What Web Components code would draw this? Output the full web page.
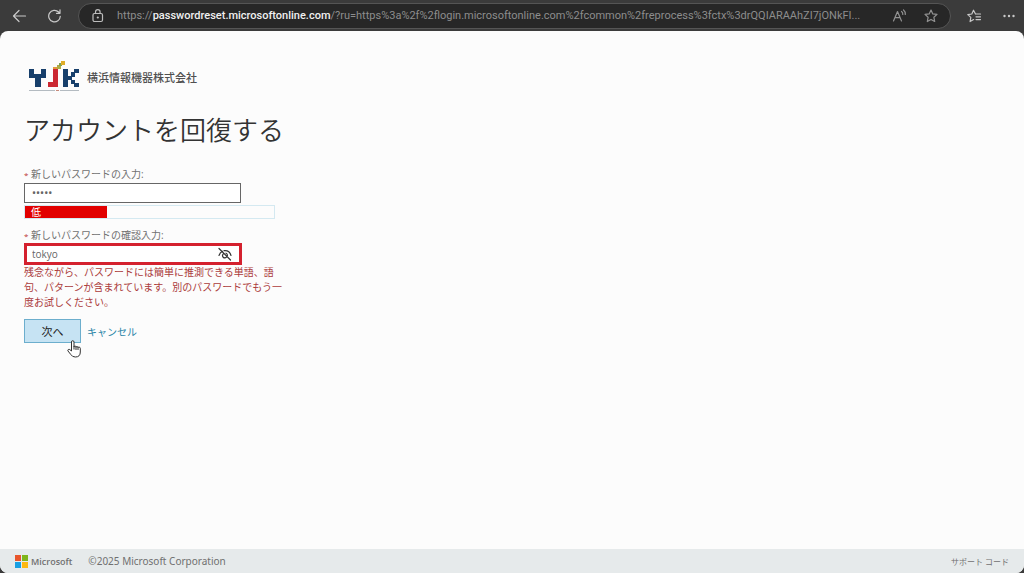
<!DOCTYPE html>
<html lang="ja">
<head>
<meta charset="utf-8">
<title>アカウントを回復する</title>
<style>
html, body { height: 100%; margin: 0; }
body {
  background: #3b3b3b;
  color: #333;
  font-family: "Open Sans", "Noto Sans CJK JP", sans-serif;
  font-size: 10px;
}
app-window { height: 100%; }
</style>
</head>
<body>
<app-window>
  <browser-bar slot="bar" scheme="https://" host="passwordreset.microsoftonline.com" path="/?ru=https%3a%2f%2flogin.microsoftonline.com%2fcommon%2freprocess%3fctx%3drQQIARAAhZI7jONkFI..."></browser-bar>
  <company-brand slot="content">横浜情報機器株式会社</company-brand>
  <reset-form slot="content"></reset-form>
  <site-footer slot="footer"></site-footer>
</app-window>

<script>
const define = (name, html, setup) => customElements.define(name, class extends HTMLElement {
  connectedCallback() {
    if (this.shadowRoot) return;
    const t = document.createElement('template');
    t.innerHTML = html;
    this.attachShadow({ mode: 'open' }).append(t.content.cloneNode(true));
    if (setup) setup(this, this.shadowRoot);
  }
});

define('app-window', `
<style>
:host { display: flex; flex-direction: column; min-height: 100%; }
.page { flex: 1; display: flex; flex-direction: column; background: #fcfcfc; border-radius: 8px; overflow: hidden; }
main { flex: 1; padding: 30px 24px 16px; }
</style>
<slot name="bar"></slot>
<div class="page">
  <main><slot name="content"></slot></main>
  <slot name="footer"></slot>
</div>`);

define('browser-bar', `
<style>
:host { display: flex; align-items: center; height: 31px; padding: 0 8px 0 12px; gap: 20px; color: #c9c9c9; }
button { display: block; padding: 0; border: 0; background: none; color: inherit; }
svg { display: block; fill: none; stroke: currentColor; stroke-width: 1.2; stroke-linecap: round; stroke-linejoin: round; }
.address { flex: 1; min-width: 0; display: flex; align-items: center; height: 24px; margin: 0 -4px; padding: 0 12px; border: 1px solid #555; border-radius: 13px; background: #272727; gap: 16px; }
.lock { color: #bdbdbd; margin-right: -4px; }
.url { flex: 1; min-width: 0; overflow: hidden; white-space: nowrap; text-overflow: ellipsis; font-family: Roboto, sans-serif; font-size: 11px; line-height: 20px; color: #8d8d8d; }
b { font-weight: 500; color: #f0f0f0; }
.dim { color: #929292; }
</style>
<button aria-label="戻る"><svg width="15" height="14" viewBox="0 0 15 14"><path d="M13.5 7H1.5M7 1.5 1.5 7 7 12.500"/></svg></button>
<button aria-label="更新"><svg width="15" height="14" viewBox="0 0 15 14"><path d="M13.300 7.300a5.800 5.800 0 1 1-1.700-4.300L13 4.300M13 .8v3.500H9.500"/></svg></button>
<div class="address">
  <svg class="lock" width="14" height="14" viewBox="0 0 14 14"><rect x="2" y="4.500" width="9.500" height="8" rx="1.500"/><path d="M4.500 4.500V3a2.300 2.300 0 0 1 4.600 0v1.500"/><circle cx="6.800" cy="8.500" r=".5" fill="currentColor"/></svg>
  <span class="url"><span id="scheme"></span><b id="host"></b><span id="path"></span></span>
  <button class="dim" aria-label="音声で読み上げる"><svg width="16" height="14" viewBox="0 0 16 14"><path d="M1.500 12 5.500 2.500 9.500 12M3 8.700h5M9.500 2.500q1.500 1.200 1.300 3M11.500 1q2.200 1.800 1.800 4.500"/></svg></button>
  <button class="dim" aria-label="お気に入りに追加"><svg width="14" height="14" viewBox="0 0 14 14"><path d="m7 1 1.800 3.900 4.200.5-3.100 2.900.8 4.200L7 10.400l-3.700 2.100.8-4.200L1 5.400l4.200-.5z"/></svg></button>
</div>
<button aria-label="お気に入り"><svg width="15" height="14" viewBox="0 0 15 14"><path d="M8.500 5 6.500 1.200 4.800 5l-4 .6 3 2.800-.7 4.200 3.500-2M6.500 1.200 8.500 5h5M9 7.800h4.500M9 10.600h4.500"/></svg></button>
<button aria-label="設定など"><svg width="14" height="14" viewBox="0 0 14 14"><g fill="currentColor" stroke="none"><circle cx="2.500" cy="7" r="1.200"/><circle cx="7" cy="7" r="1.200"/><circle cx="11.500" cy="7" r="1.200"/></g></svg></button>`,
(el, root) => {
  for (const k of ['scheme', 'host', 'path']) root.getElementById(k).textContent = el.getAttribute(k);
});

define('company-brand', `
<style>
:host { display: flex; align-items: center; gap: 7px; height: 32px; padding-left: 4px; font-size: 11px; font-weight: 500; color: #505050; }
svg { display: block; }
</style>
<svg width="52" height="32" viewBox="0 0 52 32" aria-hidden="true">
  <g fill="#173f6b">
    <path d="M1 8h5v5h7V8h5v9h-5v9H7v-9H1z"/>
    <path d="M35 8h5v7h3v-4h3V8h5v4h-4v4h-3v3h3v3h4v4h-5v-3h-3v-4h-3v7h-5z"/>
  </g>
  <path d="M25 8h5v18H20v-5h5z" fill="#cb2832"/>
  <path d="M25 6h5v2h-5z" fill="#e19a3c"/>
  <path d="M29 4h4v4h-4z" fill="#b0ac45"/>
  <path d="M31 2h3v3h-3z" fill="#7fa152"/>
  <path d="M33 0h4v4h-4z" fill="#dfad28"/>
  <path d="M1 29.500h26M32 29.500h19" stroke="#b4bbc1"/>
  <path d="M28 29.500h3" stroke="#c78b7d"/>
</svg>
<slot></slot>`);

define('strength-meter', `
<style>
:host { display: block; box-sizing: border-box; max-width: 251px; height: 14px; border: 1px solid #d4e9f1; }
div { box-sizing: border-box; width: 33%; height: 12px; padding-left: 6px; background: #e20000; color: #fff; line-height: 12px; }
</style>
<div><slot></slot></div>`);

define('reset-form', `
<style>
:host { display: block; max-width: 260px; }
h1 { margin: 17px 0 16px; font-size: 26px; line-height: 40px; font-weight: 350; white-space: nowrap; color: #333; }
label { display: block; height: 16px; line-height: 16px; color: #707070; }
label i { font-style: normal; font-size: 8px; color: #b33; }
.first { margin-bottom: 1px; }
input { box-sizing: border-box; display: block; width: 100%; height: 20px; margin: 0; padding: 0 7px; border: 1px solid #666; background: #fff; color: #666; font: inherit; outline: 0; }
input[type=password] { font-family: Roboto, sans-serif; font-size: 12px; }
.field { max-width: 217px; }
strength-meter { margin: 2px 0 8px; }
.confirm { display: flex; align-items: center; box-sizing: border-box; max-width: 218px; height: 22px; padding-right: 7px; border: 3px solid #d4212e; background: #fff; }
.confirm input { flex: 1; min-width: 0; height: 16px; border: 0; padding: 0 5px; }
.eye { display: block; padding: 0; border: 0; background: none; color: #333; }
svg { display: block; }
.error { margin: 0; line-height: 15px; color: #ab3b3b; }
.actions { position: relative; display: flex; align-items: center; gap: 6px; margin-top: 9px; }
.next { width: 57px; height: 24px; padding: 0; border: 1px solid #6caecd; background: #c6e3f3; color: #222; font: inherit; font-size: 11px; }
a { color: #2683a6; text-decoration: none; }
.pointer { position: absolute; left: 43px; top: 21px; }
</style>
<h1>アカウントを回復する</h1>
<form onsubmit="return false">
  <label class="first" for="new"><i>*</i> 新しいパスワードの入力:</label>
  <div class="field"><input id="new" type="password" value="tokyo"></div>
  <strength-meter>低</strength-meter>
  <label for="again"><i>*</i> 新しいパスワードの確認入力:</label>
  <div class="confirm">
    <input id="again" type="text" value="tokyo" aria-describedby="error">
    <button class="eye" type="button" aria-label="パスワードを隠す"><svg width="14" height="14" viewBox="0 0 14 14" fill="none" stroke="currentColor" stroke-width="1.200" stroke-linecap="round"><path d="M1 1.500 12.500 13M1 8.500q1-3 3.500-4.200M6 3.700q5.500-.6 7 4.800M8 6.200a2.300 2.300 0 0 1 1.400 2.300M5.500 6.700a2.300 2.300 0 1 0 3.200 3.200"/></svg></button>
  </div>
  <p class="error" id="error">残念ながら、パスワードには簡単に推測できる単語、語句、パターンが含まれています。別のパスワードでもう一度お試しください。</p>
  <div class="actions">
    <button class="next" type="submit">次へ</button>
    <a href="#">キャンセル</a>
    <svg class="pointer" width="15" height="18" viewBox="0 0 15 18" fill="#fff" stroke="#333" stroke-linejoin="round" aria-hidden="true"><path d="M4.500 11V2q0-1.300 1.200-1.300T7 2v5q0-1 1-1t1 1.200Q9 6.500 10 6.500t1 1.200q0-.7 1-.7t1.300 1.300V12q0 5-5 5-3 0-4.500-2.500L1 11q-.6-1 .3-1.500 1-.5 1.700.3zM7 6.500v3M9 7v3M11 7.500V10"/></svg>
  </div>
</form>`);

define('site-footer', `
<style>
:host { display: flex; align-items: center; height: 24px; padding: 0 15px; background: #e6eaeb; color: #707070; }
.ms { display: flex; align-items: center; gap: 3px; margin-right: 16px; font-family: "Open Sans", sans-serif; font-weight: 600; font-size: 9px; }
.copy { font-family: "Noto Sans", sans-serif; }
a { margin-left: auto; color: inherit; text-decoration: none; font-size: 8px; }
svg { display: block; }
</style>
<span class="ms"><svg width="13" height="13" viewBox="0 0 13 13" aria-hidden="true"><path fill="#e8552c" d="M0 0h6v6H0z"/><path fill="#7fb51b" d="M7 0h6v6H7z"/><path fill="#1ba0e3" d="M0 7h6v6H0z"/><path fill="#fdb913" d="M7 7h6v6H7z"/></svg>Microsoft</span>
<span class="copy">©2025 Microsoft Corporation</span>
<a href="#">サポート コード</a>`);
</script>
</body>
</html>
